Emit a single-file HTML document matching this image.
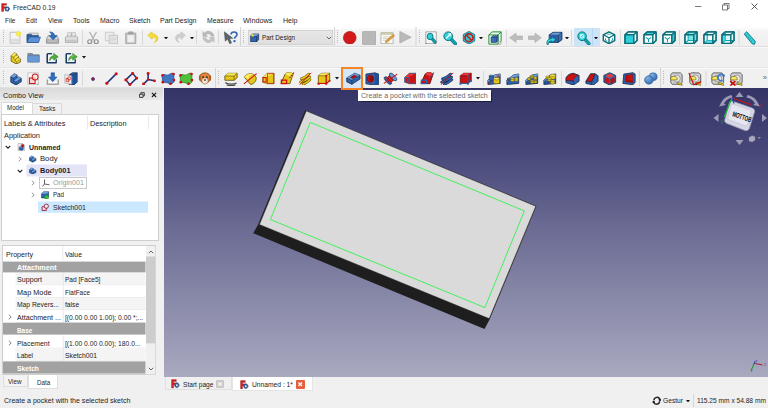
<!DOCTYPE html>
<html><head><meta charset="utf-8"><title>FreeCAD 0.19</title>
<style>
html,body{margin:0;padding:0;}
body{width:768px;height:408px;overflow:hidden;position:relative;background:#f0f0f0;font-family:"Liberation Sans",sans-serif;}
.b{position:absolute;display:block;box-sizing:border-box;}
.t{position:absolute;white-space:nowrap;transform-origin:0 50%;}
</style></head><body>
<div class="b" style="left:0px;top:0px;width:768.00px;height:27.00px;background:#fff;"></div>
<svg class="b" style="left:1px;top:2.5px" width="9" height="9.0" viewBox="0 0 16 16" preserveAspectRatio="none"><path d="M1 1h9v3H4.800v2.500H9v3H4.800V15H1z" fill="#d01f1f" stroke="#8a0e0e" stroke-width=".5"/><circle cx="11" cy="10.500" r="4" fill="#3465a4" stroke="#1b3a6b" stroke-width="1.600" stroke-dasharray="1.500 1.100"/><circle cx="11" cy="10.500" r="1.500" fill="#fff"/></svg>
<span class="t" style="left:13.00px;top:2.80px;font-size:7.6px;line-height:10px;color:#1c1c1c;transform:scaleX(0.8750);">FreeCAD 0.19</span>
<svg class="b" style="left:695px;top:6px" width="7" height="1"><rect x="0.00" y="0.20" width="6.30" height="0.70" fill="#444"/></svg>
<svg class="b" style="left:721px;top:2px" width="10" height="10" viewBox="0 0 10 10"><path d="M1.500 3h5v5h-5z" fill="none" stroke="#444" stroke-width=".700"/><path d="M3 3V1.500h5v5H6.500" fill="none" stroke="#444" stroke-width=".700"/></svg>
<svg class="b" style="left:750px;top:2px" width="10" height="10" viewBox="0 0 10 10"><path d="M1.500 1.500l6 6M7.500 1.500l-6 6" stroke="#333" stroke-width=".800"/></svg>
<span class="t" style="left:5.00px;top:15.90px;font-size:7.4px;line-height:10px;color:#1c1c1c;transform:scaleX(0.8806);">File</span>
<span class="t" style="left:26.00px;top:15.90px;font-size:7.4px;line-height:10px;color:#1c1c1c;transform:scaleX(0.8627);">Edit</span>
<span class="t" style="left:48.00px;top:15.90px;font-size:7.4px;line-height:10px;color:#1c1c1c;transform:scaleX(0.9116);">View</span>
<span class="t" style="left:73.00px;top:15.90px;font-size:7.4px;line-height:10px;color:#1c1c1c;transform:scaleX(0.9552);">Tools</span>
<span class="t" style="left:100.00px;top:15.90px;font-size:7.4px;line-height:10px;color:#1c1c1c;transform:scaleX(0.9485);">Macro</span>
<span class="t" style="left:129.00px;top:15.90px;font-size:7.4px;line-height:10px;color:#1c1c1c;transform:scaleX(0.9504);">Sketch</span>
<span class="t" style="left:160.00px;top:15.90px;font-size:7.4px;line-height:10px;color:#1c1c1c;transform:scaleX(0.9441);">Part Design</span>
<span class="t" style="left:207.00px;top:15.90px;font-size:7.4px;line-height:10px;color:#1c1c1c;transform:scaleX(0.9205);">Measure</span>
<span class="t" style="left:243.00px;top:15.90px;font-size:7.4px;line-height:10px;color:#1c1c1c;transform:scaleX(0.9827);">Windows</span>
<span class="t" style="left:283.00px;top:15.90px;font-size:7.4px;line-height:10px;color:#1c1c1c;transform:scaleX(0.9528);">Help</span>
<div class="b" style="left:0;top:27px;width:768px;height:19px;background:linear-gradient(#ffffff 0,#f3f3f3 22%,#efefef 100%)"></div>
<div class="b" style="left:0px;top:46px;width:768.00px;height:1.00px;background:#dedede;"></div>
<div class="b" style="left:0px;top:47px;width:768.00px;height:1.00px;background:#f8f8f8;"></div>
<div class="b" style="left:0px;top:48px;width:768.00px;height:19.00px;background:#f0f0f0;"></div>
<div class="b" style="left:0px;top:67px;width:768.00px;height:1.00px;background:#e8e8e8;"></div>
<div class="b" style="left:0px;top:68px;width:768.00px;height:1.00px;background:#f8f8f8;"></div>
<div class="b" style="left:0px;top:69px;width:768.00px;height:19.00px;background:#f0f0f0;"></div>
<div class="b" style="left:3px;top:30px;width:1px;height:14px;background:repeating-linear-gradient(#bdbdbd 0 1px,transparent 1px 2px)"></div>
<svg class="b" style="left:9px;top:30.5px" width="12" height="13.5" viewBox="0 0 16 16" preserveAspectRatio="none"><path d="M1.5 1.5h13v13h-13z" fill="#f4f4f4" stroke="#b5b5b5" stroke-width="1"/><path d="M2.5 9h11v4.5h-11z" fill="#dedede"/><circle cx="12.6" cy="3.4" r="3" fill="#f6f04a" stroke="#e6d936" stroke-width=".6"/></svg>
<svg class="b" style="left:26px;top:30.5px" width="15" height="13.5" viewBox="0 0 16 16" preserveAspectRatio="none"><path d="M3 2.5h10v9H3z" fill="#ececec" stroke="#9a9a9a" stroke-width=".8"/><path d="M1 4h5l1 1.2h6v8.3H1z" fill="#2f5f9e" stroke="#23487a" stroke-width=".8"/><path d="M3.4 7.2h12l-2 6.4H1.2z" fill="#5c93d6" stroke="#2d5a98" stroke-width=".8"/></svg>
<svg class="b" style="left:45px;top:30.5px" width="15" height="13.5" viewBox="0 0 16 16" preserveAspectRatio="none"><path d="M1.5 9.5l2-4h9l2 4v5h-13z" fill="#d9d9d9" stroke="#8a8a8a" stroke-width=".9"/><path d="M2.3 10.3h11.4v3.4H2.3z" fill="#bdbdbd" stroke="#8f8f8f" stroke-width=".6"/><path d="M5 1.2c3 0 5 1.2 5.2 4.3h2.6L8.6 10.4 4.6 5.5h2.5C7 3.6 6.3 2.2 5 1.200z" fill="#2e6fc0" stroke="#1d4f94" stroke-width=".7"/></svg>
<svg class="b" style="left:64px;top:30.5px" width="15" height="13.5" viewBox="0 0 16 16" preserveAspectRatio="none"><path d="M4 2h8v5H4z" fill="#f1f1f1" stroke="#b0b0b0" stroke-width=".8"/><path d="M1.5 7.5l1.5-1.5h10l1.500 1.500v6h-13z" fill="#dcdcdc" stroke="#a2a2a2" stroke-width=".9"/><path d="M2.500 10.500h11v2.200h-11z" fill="#c4c4c4"/><path d="M8 3v2.800M6.800 4.200L8 3l1.200 1.200" stroke="#aaa" stroke-width=".9" fill="none"/></svg>
<div class="b" style="left:82px;top:30px;width:1.00px;height:15.00px;background:#d8d8d8;"></div>
<svg class="b" style="left:86px;top:30.5px" width="14" height="13.5" viewBox="0 0 16 16" preserveAspectRatio="none"><path d="M4 1l5.500 10M12 1L6.500 11" stroke="#b4b4b4" stroke-width="1.500" fill="none"/><circle cx="4.300" cy="12.700" r="2.300" fill="none" stroke="#8f8f8f" stroke-width="1.400"/><circle cx="11.700" cy="12.700" r="2.300" fill="none" stroke="#8f8f8f" stroke-width="1.400"/></svg>
<svg class="b" style="left:104px;top:30.5px" width="15" height="13.5" viewBox="0 0 16 16" preserveAspectRatio="none"><path d="M1.500 1.500h9v10h-9z" fill="#ededed" stroke="#c4c4c4" stroke-width=".9"/><path d="M5.500 5h9v10h-9z" fill="#e4e4e4" stroke="#bdbdbd" stroke-width=".9"/><path d="M7 8h6M7 10h6M7 12h4" stroke="#d0d0d0" stroke-width=".8"/></svg>
<svg class="b" style="left:124px;top:30.5px" width="13.5" height="13.5" viewBox="0 0 16 16" preserveAspectRatio="none"><path d="M2 2.500h12v12.500H2z" fill="#bdbdbd" stroke="#9a9a9a" stroke-width=".9"/><path d="M3.800 4.500h8.400v9H3.800z" fill="#f0f0f0" stroke="#d0d0d0" stroke-width=".5"/><path d="M5.500 1h5v2.600h-5z" fill="#a9a9a9" stroke="#8f8f8f" stroke-width=".6"/></svg>
<div class="b" style="left:142px;top:30px;width:1.00px;height:15.00px;background:#d8d8d8;"></div>
<svg class="b" style="left:147px;top:31px" width="12.5" height="12" viewBox="0 0 16 16" preserveAspectRatio="none"><path d="M1 5.600L6.600 1v2.800c5 .2 7.600 3.200 7.200 6.600-.3 2.300-1.800 4-4.600 4.600 2-1.400 2.800-3 2.200-4.600-.6-1.500-2.300-2.200-4.800-2.200v3z" fill="#f5dc3a" stroke="#e0bf1c" stroke-width=".8"/></svg>
<svg class="b" style="left:163.5px;top:36.5px" width="4.0" height="2.5" viewBox="0 0 8 5" preserveAspectRatio="none"><path d="M0 0h8L4 5z" fill="#111"/></svg>
<svg class="b" style="left:173.5px;top:31px" width="12.0" height="12" viewBox="0 0 16 16" preserveAspectRatio="none"><path d="M15 5.600L9.400 1v2.800c-5 .2-7.600 3.200-7.200 6.600.3 2.300 1.800 4 4.600 4.600-2-1.400-2.800-3-2.200-4.600.6-1.500 2.300-2.200 4.800-2.200v3z" fill="#cfcfcf" stroke="#bdbdbd" stroke-width=".8"/></svg>
<svg class="b" style="left:190px;top:36.5px" width="4" height="2.5" viewBox="0 0 8 5" preserveAspectRatio="none"><path d="M0 0h8L4 5z" fill="#111"/></svg>
<div class="b" style="left:196px;top:30px;width:1.00px;height:14.00px;background:#d8d8d8;"></div>
<svg class="b" style="left:201.5px;top:30px" width="13.0" height="13.799999999999997" viewBox="0 0 16 16" preserveAspectRatio="none"><path d="M14.800 7.200A6.800 6.800 0 0 0 3 3.600L1 1.600v6h6L4.900 5.500a4 4 0 0 1 6.600 1.700z" fill="#b9b9b9" stroke="#a8a8a8" stroke-width=".4"/><path d="M1.200 8.800A6.800 6.800 0 0 0 13 12.400l2 2v-6H9l2.100 2.100a4 4 0 0 1-6.600-1.700z" fill="#c4c4c4" stroke="#a8a8a8" stroke-width=".4"/></svg>
<div class="b" style="left:218px;top:30px;width:1.00px;height:14.00px;background:#d8d8d8;"></div>
<svg class="b" style="left:223px;top:30.5px" width="14.5" height="13.5" viewBox="0 0 16 16" preserveAspectRatio="none"><path d="M1.500 1l1 11 2.600-2.400L7.400 15l2-.9-2.200-5.200 3.600-.3z" fill="#5d666c" stroke="#3e464b" stroke-width=".6"/><path d="M8.800 4.200c.2-2 1.500-3 3.300-3 2 0 3.300 1.200 3.300 2.900 0 2.600-2.700 2.500-2.700 5" fill="none" stroke="#2f66ad" stroke-width="1.700"/><circle cx="12.700" cy="12" r="1.300" fill="#2b63b0"/></svg>
<div class="b" style="left:240px;top:27px;width:1.00px;height:19.00px;background:#d4d4d4;"></div>
<div class="b" style="left:243px;top:30px;width:1px;height:14px;background:repeating-linear-gradient(#bdbdbd 0 1px,transparent 1px 2px)"></div>
<div class="b" style="left:247.500px;top:30px;width:85.500px;height:14.500px;background:linear-gradient(#e6e6e6,#dfdfdf);border:1px solid #d3d3d3;"></div>
<svg class="b" style="left:250px;top:32.5px" width="9.5" height="9.5" viewBox="0 0 16 16" preserveAspectRatio="none"><path d="M1 5L5 1.500h9.500V11L11 15H1z" fill="#2f63ad" stroke="#0f2748" stroke-width="1"/><path d="M1 5h10v10M11 5l3.500-3.500" fill="none" stroke="#0f2748" stroke-width=".8"/><path d="M5 1.500h9.500L11 5H1z" fill="#6fa0dc"/><circle cx="4.500" cy="4" r="2.300" fill="#f8ea5e" stroke="#5a4a00" stroke-width=".5"/></svg>
<span class="t" style="left:261.50px;top:32.80px;font-size:7.2px;line-height:10px;color:#1c1c1c;transform:scaleX(0.8773);">Part Design</span>
<svg class="b" style="left:325.500px;top:35.500px" width="6" height="4" viewBox="0 0 6 4"><path d="M.800 .800L3 3l2.200-2.200" fill="none" stroke="#444" stroke-width=".800"/></svg>
<div class="b" style="left:334px;top:27px;width:1.00px;height:19.00px;background:#d4d4d4;"></div>
<div class="b" style="left:337px;top:30px;width:1px;height:14px;background:repeating-linear-gradient(#bdbdbd 0 1px,transparent 1px 2px)"></div>
<svg class="b" style="left:343px;top:30.5px" width="13.5" height="13.5" viewBox="0 0 16 16" preserveAspectRatio="none"><circle cx="8" cy="8" r="7.500" fill="#d31a1a" stroke="#a80f0f" stroke-width=".8"/></svg>
<svg class="b" style="left:361.5px;top:30.5px" width="14.5" height="14.0" viewBox="0 0 16 16" preserveAspectRatio="none"><rect x=".5" y=".5" width="15" height="15" rx="1" fill="#b8b8b8" stroke="#a5a5a5" stroke-width=".8"/></svg>
<svg class="b" style="left:379.5px;top:30.5px" width="15.0" height="13.5" viewBox="0 0 16 16" preserveAspectRatio="none"><path d="M1 2h13v13H1z" fill="#fbfbf7" stroke="#a9a79a" stroke-width=".9"/><path d="M1 2h13v2.500H1z" fill="#cfc9a5"/><path d="M3 7h9M3 9h9M3 11h6" stroke="#bdbba8" stroke-width=".7"/><path d="M15.500 5.500L8 13l-2.300.8.700-2.300L14 4z" fill="#e9a23a" stroke="#a8641a" stroke-width=".6"/></svg>
<svg class="b" style="left:399px;top:31px" width="13" height="12.5" viewBox="0 0 16 16" preserveAspectRatio="none"><path d="M1 .5L15 8 1 15.500z" fill="#b9b9b9" stroke="#a3a3a3" stroke-width=".8"/></svg>
<svg class="b" style="left:415px;top:27px" width="2" height="19"><rect x="0.50" y="0.00" width="1.00" height="19.00" fill="#d4d4d4"/></svg>
<div class="b" style="left:419px;top:30px;width:1px;height:14px;background:repeating-linear-gradient(#bdbdbd 0 1px,transparent 1px 2px)"></div>
<svg class="b" style="left:425px;top:30.5px" width="12.5" height="13.5" viewBox="0 0 16 16" preserveAspectRatio="none"><path d="M1 1h13.500v14H1z" fill="#f6f6f6" stroke="#8e8e8e" stroke-width=".9"/><path d="M1 13.500l2 1.500H1z" fill="#666"/><path d="M8.78 8.78L12.8 13.2" stroke="#0b6f7a" stroke-width="3.8" stroke-linecap="round"/><path d="M8.78 8.78L12.8 13.2" stroke="#10a0ac" stroke-width="2.6" stroke-linecap="round"/><circle cx="6.5" cy="6.5" r="3.8" fill="#2fd0dc" stroke="#0b6f7a" stroke-width="1.100"/></svg>
<svg class="b" style="left:443px;top:30.5px" width="14" height="14.0" viewBox="0 0 16 16" preserveAspectRatio="none"><path d="M9.0 9.0L14 14.5" stroke="#0b6f7a" stroke-width="4.0" stroke-linecap="round"/><path d="M9.0 9.0L14 14.5" stroke="#10a0ac" stroke-width="2.8" stroke-linecap="round"/><circle cx="6" cy="6" r="5" fill="#2fd0dc" stroke="#0b6f7a" stroke-width="1.100"/><path d="M3.500 8.500l5-5" stroke="#e8ffff" stroke-width="1.600"/><path d="M6 3.200h2.800V6" fill="none" stroke="#e8ffff" stroke-width="1.200"/></svg>
<svg class="b" style="left:461.5px;top:30.5px" width="14.0" height="13.5" viewBox="0 0 16 16" preserveAspectRatio="none"><path d="M8 .5l6.500 3.700v7.600L8 15.500 1.500 11.800V4.200z" fill="#2fd0dc" stroke="#0b6f7a" stroke-width="1"/><circle cx="8" cy="8" r="4.600" fill="none" stroke="#c21b1b" stroke-width="1.900"/><path d="M4.800 4.800l6.400 6.400" stroke="#c21b1b" stroke-width="1.900"/></svg>
<svg class="b" style="left:479px;top:36.5px" width="4" height="2.5" viewBox="0 0 8 5" preserveAspectRatio="none"><path d="M0 0h8L4 5z" fill="#111"/></svg>
<svg class="b" style="left:488px;top:30.5px" width="14" height="14.0" viewBox="0 0 16 16" preserveAspectRatio="none"><path d="M1 4.500L4.500 1H15v10.500L11.500 15H1z" fill="#eef6ee" stroke="#1e8f2e" stroke-width="1.100"/><path d="M1 4.500h10.500V15M11.500 4.500L15 1" fill="none" stroke="#1e8f2e" stroke-width="1.100"/><path d="M3.500 7.500l2-2h6v5.500l-2 2h-6z" fill="#3b6fb5" stroke="#1a3a6a" stroke-width=".7"/><path d="M3.500 7.500h6v5.500M9.500 7.500l2-2" fill="none" stroke="#1a3a6a" stroke-width=".6"/><circle cx="13.500" cy="13.800" r="1.500" fill="#f4f4f4" stroke="#777" stroke-width=".6"/></svg>
<div class="b" style="left:506px;top:30px;width:1.00px;height:15.00px;background:#d8d8d8;"></div>
<svg class="b" style="left:509px;top:31.5px" width="14" height="11.5" viewBox="0 0 16 16" preserveAspectRatio="none"><path d="M.800 8L8 1.500v4h7.500v5H8v4z" fill="#bdbdbd" stroke="#a9a9a9" stroke-width=".7"/></svg>
<svg class="b" style="left:528px;top:31.5px" width="14" height="11.5" viewBox="0 0 16 16" preserveAspectRatio="none"><path d="M15.200 8L8 1.500v4H.500v5H8v4z" fill="#bdbdbd" stroke="#a9a9a9" stroke-width=".7"/></svg>
<svg class="b" style="left:546px;top:30.5px" width="17" height="14.0" viewBox="0 0 16 16" preserveAspectRatio="none"><path d="M3 4.500L6.500 1.500H15v8.500L11.500 13H3z" fill="#3d6fb3" stroke="#14305a" stroke-width=".9"/><path d="M3 4.500h8.500V13M11.500 4.500L15 1.500" fill="none" stroke="#14305a" stroke-width=".8"/><path d="M3.200 4.700h8.100V12.800H3.200z" fill="#2d5ea3"/><path d="M6.700 1.900h7.600L11.400 4.300H3.900z" fill="#6f9bd4"/><path d="M1 15.500c-.8-4 1-6.500 4.200-6.800V6.800L9.500 10l-4.300 3.200v-1.900c-1.800.2-3 1.500-3.100 4.200z" fill="#2fd0dc" stroke="#0b6f7a" stroke-width=".8"/></svg>
<svg class="b" style="left:564.5px;top:36.5px" width="4.0" height="2.5" viewBox="0 0 8 5" preserveAspectRatio="none"><path d="M0 0h8L4 5z" fill="#111"/></svg>
<div class="b" style="left:571px;top:30px;width:1.00px;height:15.00px;background:#d8d8d8;"></div>
<div class="b" style="left:574px;top:28px;width:26.00px;height:18.00px;background:#cce4f7;"></div>
<div class="b" style="left:592px;top:28px;width:1.00px;height:18.00px;background:#b8d6f0;"></div>
<svg class="b" style="left:577px;top:30.5px" width="13.5" height="14.0" viewBox="0 0 16 16" preserveAspectRatio="none"><path d="M9.0 9.0L14 14.5" stroke="#0b6f7a" stroke-width="4.0" stroke-linecap="round"/><path d="M9.0 9.0L14 14.5" stroke="#10a0ac" stroke-width="2.8" stroke-linecap="round"/><circle cx="6" cy="6" r="5" fill="#2fd0dc" stroke="#0b6f7a" stroke-width="1.100"/><circle cx="6" cy="6" r="2.200" fill="none" stroke="#e8ffff" stroke-width="1.100"/><path d="M4 4l4 4" stroke="#e8ffff" stroke-width="1"/></svg>
<svg class="b" style="left:594px;top:36.5px" width="4" height="2.5" viewBox="0 0 8 5" preserveAspectRatio="none"><path d="M0 0h8L4 5z" fill="#111"/></svg>
<svg class="b" style="left:602px;top:30.5px" width="14" height="13.5" viewBox="0 0 16 16" preserveAspectRatio="none"><path d="M8 1l6.500 3.500v7L8 15l-6.500-3.500v-7z" fill="#fff" stroke="#0b6f7a" stroke-width="1.700" stroke-linejoin="round"/><path d="M1.500 4.500L8 8l6.500-3.500M8 8v7" fill="none" stroke="#0b6f7a" stroke-width="1.500"/><path d="M4 8.500v2.500l2 1M12 8.500v2.500l-2 1M6 4.500l2-1 2 1" fill="none" stroke="#10a0ac" stroke-width="1"/></svg>
<div class="b" style="left:620px;top:30px;width:1.00px;height:15.00px;background:#d8d8d8;"></div>
<svg class="b" style="left:624px;top:30.5px" width="14" height="13.5" viewBox="0 0 16 16" preserveAspectRatio="none"><path d="M1.200 4.500L4.800 1.200h10v10l-3.600 3.600H1.200z" fill="#fff" stroke="#0b6f7a" stroke-width="1.700" stroke-linejoin="round"/><path d="M1.200 4.500h10v10.300H1.200z" fill="#2fd0dc"/><path d="M1.200 4.500L4.800 1.200h10l-3.600 3.300z" fill="#eafcfd"/><path d="M11.200 4.500l3.600-3.300v10l-3.600 3.600z" fill="#f4ffff"/><path d="M1.200 4.500L4.800 1.200h10v10l-3.600 3.600H1.200z" fill="none" stroke="#0b6f7a" stroke-width="1.700" stroke-linejoin="round"/><path d="M1.200 4.500h10v10.300M11.200 4.500l3.600-3.300" fill="none" stroke="#0b6f7a" stroke-width="1.700"/></svg>
<svg class="b" style="left:643px;top:30.5px" width="14" height="13.5" viewBox="0 0 16 16" preserveAspectRatio="none"><path d="M1.200 4.500L4.800 1.200h10v10l-3.600 3.600H1.200z" fill="#fff" stroke="#0b6f7a" stroke-width="1.700" stroke-linejoin="round"/><path d="M1.200 4.500h10v10.300H1.200z" fill="#fff"/><path d="M1.200 4.500L4.800 1.200h10l-3.600 3.300z" fill="#2fd0dc"/><path d="M11.200 4.500l3.600-3.300v10l-3.600 3.600z" fill="#f4ffff"/><path d="M3.300 7.500l3 2.500 3-2.500M6.300 10v3" stroke="#10a0ac" stroke-width="1.200" fill="none"/><path d="M1.200 4.500L4.800 1.200h10v10l-3.600 3.600H1.200z" fill="none" stroke="#0b6f7a" stroke-width="1.700" stroke-linejoin="round"/><path d="M1.200 4.500h10v10.300M11.200 4.500l3.600-3.300" fill="none" stroke="#0b6f7a" stroke-width="1.700"/></svg>
<svg class="b" style="left:662px;top:30.5px" width="14" height="13.5" viewBox="0 0 16 16" preserveAspectRatio="none"><path d="M1.200 4.500L4.800 1.200h10v10l-3.600 3.600H1.200z" fill="#fff" stroke="#0b6f7a" stroke-width="1.700" stroke-linejoin="round"/><path d="M1.200 4.500h10v10.300H1.200z" fill="#fff"/><path d="M1.200 4.500L4.800 1.200h10l-3.600 3.300z" fill="#eafcfd"/><path d="M11.200 4.500l3.600-3.300v10l-3.600 3.600z" fill="#2fd0dc"/><path d="M3.300 7.500l3 2.500 3-2.500M6.300 10v3" stroke="#10a0ac" stroke-width="1.200" fill="none"/><path d="M1.200 4.500L4.800 1.200h10v10l-3.600 3.600H1.200z" fill="none" stroke="#0b6f7a" stroke-width="1.700" stroke-linejoin="round"/><path d="M1.200 4.500h10v10.300M11.200 4.500l3.600-3.300" fill="none" stroke="#0b6f7a" stroke-width="1.700"/></svg>
<div class="b" style="left:679px;top:30px;width:1.00px;height:15.00px;background:#d8d8d8;"></div>
<svg class="b" style="left:684px;top:30.5px" width="14" height="13.5" viewBox="0 0 16 16" preserveAspectRatio="none"><path d="M1.200 4.500L4.800 1.200h10v10l-3.600 3.600H1.200z" fill="#fff" stroke="#0b6f7a" stroke-width="1.700" stroke-linejoin="round"/><path d="M1.200 4.500h10v10.300H1.200z" fill="#e2fafb"/><path d="M1.200 4.500L4.800 1.200h10l-3.600 3.300z" fill="#eafcfd"/><path d="M11.200 4.500l3.600-3.300v10l-3.600 3.600z" fill="#bff0f4"/><path d="M4.800 1.200v10h10M4.800 11.200l-3.600 3.600" fill="none" stroke="#10a0ac" stroke-width="1.300"/><path d="M5 1h10v10H5z" fill="#2fd0dc" opacity=".55"/><path d="M1.200 4.500L4.800 1.200h10v10l-3.600 3.600H1.200z" fill="none" stroke="#0b6f7a" stroke-width="1.700" stroke-linejoin="round"/><path d="M1.200 4.500h10v10.300M11.200 4.500l3.600-3.300" fill="none" stroke="#0b6f7a" stroke-width="1.700"/></svg>
<svg class="b" style="left:703px;top:30.5px" width="14" height="13.5" viewBox="0 0 16 16" preserveAspectRatio="none"><path d="M1.200 4.500L4.800 1.200h10v10l-3.600 3.600H1.200z" fill="#fff" stroke="#0b6f7a" stroke-width="1.700" stroke-linejoin="round"/><path d="M1.200 4.500h10v10.300H1.200z" fill="#f4ffff"/><path d="M1.200 4.500L4.800 1.200h10l-3.600 3.300z" fill="#eafcfd"/><path d="M11.200 4.500l3.600-3.300v10l-3.600 3.600z" fill="#e2fafb"/><path d="M4.800 1.200v10h10M4.800 11.200l-3.600 3.600" fill="none" stroke="#10a0ac" stroke-width="1.300"/><path d="M1 15l4-4h10l-4 4z" fill="#2fd0dc" opacity=".7"/><path d="M1.200 4.500L4.800 1.200h10v10l-3.600 3.600H1.200z" fill="none" stroke="#0b6f7a" stroke-width="1.700" stroke-linejoin="round"/><path d="M1.200 4.500h10v10.300M11.200 4.500l3.600-3.300" fill="none" stroke="#0b6f7a" stroke-width="1.700"/></svg>
<svg class="b" style="left:721px;top:30.5px" width="14" height="13.5" viewBox="0 0 16 16" preserveAspectRatio="none"><path d="M1.200 4.500L4.800 1.200h10v10l-3.600 3.600H1.200z" fill="#fff" stroke="#0b6f7a" stroke-width="1.700" stroke-linejoin="round"/><path d="M1.200 4.500h10v10.300H1.200z" fill="#d8f7f9"/><path d="M1.200 4.500L4.800 1.200h10l-3.600 3.300z" fill="#eafcfd"/><path d="M11.200 4.500l3.600-3.300v10l-3.600 3.600z" fill="#e2fafb"/><path d="M4.800 1.200v10h10M4.800 11.200l-3.600 3.600" fill="none" stroke="#10a0ac" stroke-width="1.300"/><path d="M1 5l4-4v10l-4 4z" fill="#2fd0dc" opacity=".8"/><path d="M1.200 4.500L4.800 1.200h10v10l-3.600 3.600H1.200z" fill="none" stroke="#0b6f7a" stroke-width="1.700" stroke-linejoin="round"/><path d="M1.200 4.500h10v10.300M11.200 4.500l3.600-3.300" fill="none" stroke="#0b6f7a" stroke-width="1.700"/></svg>
<svg class="b" style="left:738px;top:30px" width="2" height="15"><rect x="0.50" y="0.00" width="1.00" height="15.00" fill="#d8d8d8"/></svg>
<svg class="b" style="left:743px;top:30.5px" width="13" height="14.0" viewBox="0 0 16 16" preserveAspectRatio="none"><path d="M1.500 3.500L4.500 .800 15.200 12l-1 3.200-2.800-.4z" fill="#2fd0dc" stroke="#0b6f7a" stroke-width="1"/><path d="M4 5.500l1.500-1.300M6 7.500l1.500-1.300M8 9.600l1.500-1.300M10 11.700l1.500-1.300" stroke="#0b6f7a" stroke-width=".7"/></svg>
<div class="b" style="left:3px;top:50px;width:1px;height:14px;background:repeating-linear-gradient(#bdbdbd 0 1px,transparent 1px 2px)"></div>
<svg class="b" style="left:9.5px;top:50.5px" width="11.5" height="13.5" viewBox="0 0 16 16" preserveAspectRatio="none"><path d="M1.500 5.500L6 2l3.500 1.500v2l2.500 1v2l3 1.200v3L9 15.500 1.500 12z" fill="#e6c619" stroke="#5a4a00" stroke-width=".9" stroke-linejoin="round"/><path d="M1.500 5.500L6 2l3.500 1.500L5 7z" fill="#f8ea5e"/><path d="M5 9l4.500-3.500 2.500 1L7.500 10z" fill="#f8ea5e"/><path d="M7.500 12l4.500-3.500 3 1.200-6 3.800z" fill="#f8ea5e"/><path d="M1.500 5.500L5 7v2l2.500 1v2L9 12.600v2.900M5 7l4.500-3.500M7.500 10L12 6.500M9 12.600l6-2.900" fill="none" stroke="#5a4a00" stroke-width=".6"/></svg>
<svg class="b" style="left:27px;top:51.5px" width="13" height="11.5" viewBox="0 0 16 16" preserveAspectRatio="none"><path d="M1 2h5.500l1.200 1.800H15V14H1z" fill="#7b8797" stroke="#66717f" stroke-width=".8"/><path d="M1 5.200h14v8.800H1z" fill="#6a9ad6" stroke="#4a78b4" stroke-width=".6"/></svg>
<svg class="b" style="left:46px;top:50.5px" width="13" height="13.0" viewBox="0 0 16 16" preserveAspectRatio="none"><path d="M1.500 3.500h6M1.500 3.500v11h11V10" fill="none" stroke="#173a63" stroke-width="1.900" stroke-linejoin="round"/><path d="M2.600 4.600h8.800v8.800H2.600z" fill="#f2f5f8"/><path d="M4.500 12c0-4 1.700-6 5-6.300V3L15 7.200 9.500 11.300V8.700c-2.400.1-4 1.100-5 3.300z" fill="#4fae3a" stroke="#2a7a1c" stroke-width=".7"/></svg>
<svg class="b" style="left:64.5px;top:50.5px" width="13.0" height="13.0" viewBox="0 0 16 16" preserveAspectRatio="none"><path d="M1.500 3.500h6M1.500 3.500v11h11V10" fill="none" stroke="#173a63" stroke-width="1.900" stroke-linejoin="round"/><path d="M2.600 4.600h8.800v8.800H2.600z" fill="#f2f5f8"/><path d="M4.500 12c0-4 1.700-6 5-6.300V3L15 7.200 9.500 11.300V8.700c-2.400.1-4 1.100-5 3.300z" fill="#4fae3a" stroke="#2a7a1c" stroke-width=".7"/><path d="M8 9c.5-2.500 2-3.500 4-3.700" fill="none" stroke="#8fd67c" stroke-width=".8"/></svg>
<svg class="b" style="left:82px;top:56px" width="4" height="2.5" viewBox="0 0 8 5" preserveAspectRatio="none"><path d="M0 0h8L4 5z" fill="#111"/></svg>
<div class="b" style="left:3px;top:71px;width:1px;height:14px;background:repeating-linear-gradient(#bdbdbd 0 1px,transparent 1px 2px)"></div>
<svg class="b" style="left:9.5px;top:71.5px" width="12.0" height="13.5" viewBox="0 0 16 16" preserveAspectRatio="none"><path d="M1 5.500L5.500 2 9.500 3.800v3.400l2-1.400 3.500 1.700v4L8 15.500 1 12z" fill="#2f63ad" stroke="#0f2748" stroke-width=".9" stroke-linejoin="round"/><path d="M1 5.500L5.500 2 9.500 3.800 5 7.300z" fill="#6fa0dc"/><path d="M5 10.800l6.500-5 3.500 1.700L8 12.200z" fill="#6fa0dc"/><path d="M1 5.500l4 1.800v3.500l3 1.400v3.300M5 7.300l4.500-3.500M8 12.200l7-4.700" fill="none" stroke="#0f2748" stroke-width=".6"/></svg>
<svg class="b" style="left:27px;top:71.5px" width="13" height="13.5" viewBox="0 0 16 16" preserveAspectRatio="none"><path d="M1 1h13v14H1z" fill="#f7f7f7" stroke="#b0b0b0" stroke-width=".8"/><path d="M12 15l2-2v2z" fill="#999"/><path d="M3 7h7v6.500H3z" fill="#f9d5d5" stroke="#cc1111" stroke-width="1.200"/><circle cx="10" cy="6" r="3.600" fill="#fbe3e3" fill-opacity=".7" stroke="#cc1111" stroke-width="1.200"/></svg>
<svg class="b" style="left:45.5px;top:71.5px" width="13.5" height="13.5" viewBox="0 0 16 16" preserveAspectRatio="none"><path d="M1.500 9v5.500h13V9" fill="#e9e9e9" stroke="#8d8d8d" stroke-width="1.300"/><path d="M3 10.500h10v2.500H3z" fill="#fafafa"/><path d="M6 1h4v5h3l-5 5.500L3 6h3z" fill="#2e6fc0" stroke="#1d4f94" stroke-width=".7"/></svg>
<svg class="b" style="left:64px;top:71.5px" width="14" height="13.5" viewBox="0 0 16 16" preserveAspectRatio="none"><path d="M6 3.500L9.500 1H15v11l-3.500 3H6z" fill="#2f63ad" stroke="#0f2748" stroke-width=".9"/><path d="M6 3.500h5.500V15M11.500 3.500L15 1" fill="none" stroke="#0f2748" stroke-width=".7"/><path d="M11.500 3.500L15 1v11l-3.500 3z" fill="#244f90"/><path d="M1 3l7.500 1.500v10L1 13z" fill="#f4f4f4" stroke="#999" stroke-width=".7"/><path d="M2.500 7.500l3 .6v3.600l-3-.6z" fill="#f9d5d5" stroke="#cc1111" stroke-width=".8"/><circle cx="5.800" cy="7.600" r="1.900" fill="none" stroke="#cc1111" stroke-width=".8"/></svg>
<div class="b" style="left:82px;top:71px;width:1.00px;height:15.00px;background:#d8d8d8;"></div>
<svg class="b" style="left:91px;top:76.5px" width="4" height="4.0" viewBox="0 0 16 16" preserveAspectRatio="none"><circle cx="8" cy="8" r="6" fill="#cc1111" stroke="#233a8a" stroke-width="3"/></svg>
<svg class="b" style="left:105px;top:72px" width="13" height="13" viewBox="0 0 16 16" preserveAspectRatio="none"><path d="M2 14L14 2" stroke="#1c2f7a" stroke-width="1.800"/><circle cx="2.200" cy="13.800" r="1.900" fill="#cc1111"/><circle cx="13.800" cy="2.200" r="1.900" fill="#cc1111"/></svg>
<svg class="b" style="left:123.5px;top:71.5px" width="14.5" height="14.0" viewBox="0 0 16 16" preserveAspectRatio="none"><path d="M2 9L9.500 1.500 14 7 6.500 14.500z" fill="none" stroke="#1c2f7a" stroke-width="1.700"/><circle cx="2" cy="9" r="1.700" fill="#cc1111"/><circle cx="9.500" cy="1.700" r="1.700" fill="#cc1111"/><circle cx="14" cy="7" r="1.700" fill="#cc1111"/><circle cx="6.500" cy="14.300" r="1.700" fill="#cc1111"/></svg>
<svg class="b" style="left:142px;top:71.5px" width="14" height="13.5" viewBox="0 0 16 16" preserveAspectRatio="none"><path d="M7 1.500V9L1.500 14.500M7 9l7.500 1.500" fill="none" stroke="#1c2f7a" stroke-width="1.800"/><circle cx="7" cy="1.800" r="1.700" fill="#cc1111"/><circle cx="1.800" cy="14.200" r="1.700" fill="#cc1111"/><circle cx="14.200" cy="10.500" r="1.700" fill="#cc1111"/><circle cx="7" cy="9" r="1.400" fill="#cc1111"/></svg>
<svg class="b" style="left:161px;top:71.5px" width="14.5" height="13.5" viewBox="0 0 16 16" preserveAspectRatio="none"><path d="M1.500 3.500C4 2 6 4.500 8 3.500s3.500-3 6-1.500c1 2-.5 4 .5 6.500s-1 5-3.500 5.500-3.500-2-6-1.500S1 11 1.500 8.500 0 5.500 1.500 3.500z" fill="#3f76c2" stroke="#1d4584" stroke-width=".8"/><circle cx="1.800" cy="3.800" r="1.500" fill="#cc1111"/><circle cx="13.800" cy="2.400" r="1.500" fill="#cc1111"/><circle cx="14.200" cy="9.500" r="1.500" fill="#cc1111"/><circle cx="10.500" cy="14" r="1.500" fill="#cc1111"/><circle cx="2" cy="12" r="1.500" fill="#cc1111"/></svg>
<svg class="b" style="left:179px;top:71.5px" width="14.5" height="13.5" viewBox="0 0 16 16" preserveAspectRatio="none"><path d="M1.500 3.500C4 2 6 4.500 8 3.500s3.500-3 6-1.500c1 2-.5 4 .5 6.500s-1 5-3.500 5.500-3.500-2-6-1.500S1 11 1.500 8.500 0 5.500 1.500 3.500z" fill="#4fc23a" stroke="#22761a" stroke-width=".8"/><circle cx="1.800" cy="3.800" r="1.500" fill="#cc1111"/><circle cx="13.800" cy="2.400" r="1.500" fill="#cc1111"/><circle cx="14.200" cy="9.500" r="1.500" fill="#cc1111"/><circle cx="10.500" cy="14" r="1.500" fill="#cc1111"/><circle cx="2" cy="12" r="1.500" fill="#cc1111"/></svg>
<svg class="b" style="left:198px;top:71.5px" width="14" height="13.5" viewBox="0 0 16 16" preserveAspectRatio="none"><ellipse cx="8" cy="7" rx="6.500" ry="6" fill="#e2853a" stroke="#7a3f12" stroke-width=".8"/><path d="M2.500 3c-2 2-2 6 0 8 1-2.500 1-5.500 0-8zM13.500 3c2 2 2 6 0 8-1-2.500-1-5.500 0-8z" fill="#a85a22"/><ellipse cx="8" cy="10.500" rx="3.600" ry="3.800" fill="#fbe8d4" stroke="#7a3f12" stroke-width=".5"/><circle cx="5.800" cy="6" r="1" fill="#222"/><circle cx="10.200" cy="6" r="1" fill="#222"/><ellipse cx="8" cy="9.500" rx="1.200" ry=".9" fill="#222"/></svg>
<div class="b" style="left:215px;top:68px;width:1.00px;height:20.00px;background:#d4d4d4;"></div>
<div class="b" style="left:218px;top:71px;width:1px;height:14px;background:repeating-linear-gradient(#bdbdbd 0 1px,transparent 1px 2px)"></div>
<svg class="b" style="left:224px;top:71.5px" width="14" height="14.0" viewBox="0 0 16 16" preserveAspectRatio="none"><path d="M1 4.5l3.5 -3h10.5v5l-3.5 3h-10.5z" fill="#e6c619" stroke="#5a4a00" stroke-width=".9" stroke-linejoin="round"/><path d="M1 4.5l3.5 -3h10.5l-3.5 3z" fill="#f8ea5e"/><path d="M1 4.5h10.5v5M11.5 4.5l3.5 -3" fill="none" stroke="#5a4a00" stroke-width=".7"/><path d="M1.500 12c2 2 9 2.800 13 .5M3 14.800c3 1 7 1 10 0" fill="none" stroke="#4a4a4a" stroke-width="1.300"/></svg>
<svg class="b" style="left:243px;top:71.5px" width="14.5" height="13.5" viewBox="0 0 16 16" preserveAspectRatio="none"><path d="M1.500 6C3 2.500 8 1 12 3l2.500 3.500c.5 4-2 7-6 8.500z" fill="#e6c619" stroke="#5a4a00" stroke-width=".9"/><path d="M1.500 6C3 2.500 8 1 12 3c-3.500.5-6 3-6 6z" fill="#f8ea5e"/><path d="M1 14L15 2" stroke="#cc1111" stroke-width="1.200"/></svg>
<svg class="b" style="left:262px;top:71.5px" width="12.5" height="13.0" viewBox="0 0 16 16" preserveAspectRatio="none"><path d="M1 6.500L7 1.500h8.500V14.500H7L1 12.500z" fill="#e6c619" stroke="#5a4a00" stroke-width=".7" stroke-linejoin="round"/><path d="M1 6.500L7 1.500h8.500L5.500 6.500z" fill="#f8ea5e"/><path d="M7 2h8v12H7z" fill="none" stroke="#cc1111" stroke-width=".900"/><path d="M1.300 6.800h4v5.400h-4z" fill="#e6c619" stroke="#cc1111" stroke-width="1.300"/></svg>
<svg class="b" style="left:279.5px;top:71.0px" width="15.0" height="14.0" viewBox="0 0 16 16" preserveAspectRatio="none"><path d="M1 14L5.500 3.500C7 1.500 11 1 14 3.500l-3.500 11z" fill="#e6c619" stroke="#5a4a00" stroke-width=".9"/><path d="M5.500 3.500C7 1.500 11 1 14 3.500L10 6z" fill="#f8ea5e"/><path d="M1.500 10.500h5.500v4H1.500z" fill="none" stroke="#cc1111" stroke-width="1.400"/><path d="M10 8L15.500 1" stroke="#cc1111" stroke-width="1.100" stroke-dasharray="2 1"/></svg>
<svg class="b" style="left:299px;top:71.5px" width="13" height="13.5" viewBox="0 0 16 16" preserveAspectRatio="none"><path d="M2 12c3-1 8-3 11-6M3 8c3-1 6-2.500 9-5.500M5 14.500c3-1 6-3 8.500-5.500" fill="none" stroke="#5a4a00" stroke-width="3.200" stroke-linecap="round"/><path d="M2 12c3-1 8-3 11-6M3 8c3-1 6-2.500 9-5.500M5 14.500c3-1 6-3 8.500-5.500" fill="none" stroke="#e6c619" stroke-width="2" stroke-linecap="round"/><path d="M1 15L15 1" stroke="#cc1111" stroke-width="1.100"/></svg>
<svg class="b" style="left:317px;top:71.5px" width="14" height="13.5" viewBox="0 0 16 16" preserveAspectRatio="none"><path d="M1.5 4.5l4 -3h9v9l-4 3h-9z" fill="#e6c619" stroke="#5a4a00" stroke-width=".9" stroke-linejoin="round"/><path d="M1.5 4.5l4 -3h9l-4 3z" fill="#f8ea5e"/><path d="M1.5 4.5h9v9M10.5 4.5l4 -3" fill="none" stroke="#5a4a00" stroke-width=".7"/><path d="M1.500 13.500h9l4-3M10.500 13.500v-9" fill="none" stroke="#cc1111" stroke-width="1.200"/><circle cx="1.800" cy="13.800" r="1.400" fill="#cc1111"/><circle cx="10.500" cy="13.800" r="1.400" fill="#cc1111"/><circle cx="14.400" cy="10.500" r="1.200" fill="#cc1111"/><circle cx="10.500" cy="4.500" r="1.100" fill="#cc1111"/></svg>
<svg class="b" style="left:335px;top:77px" width="4" height="2.5" viewBox="0 0 8 5" preserveAspectRatio="none"><path d="M0 0h8L4 5z" fill="#111"/></svg>
<svg class="b" style="left:364.5px;top:71.5px" width="14.5" height="13.5" viewBox="0 0 16 16" preserveAspectRatio="none"><path d="M1 2.500L11 1l4 1.500V15l-4 .5L1 14z" fill="#2f63ad" stroke="#0f2748" stroke-width=".9" stroke-linejoin="round"/><path d="M11 1l4 1.500V15l-4 .5z" fill="#244f90"/><ellipse cx="6" cy="8" rx="3.600" ry="4.200" fill="#cc1111" stroke="#5a0808" stroke-width=".7"/><ellipse cx="6.800" cy="8" rx="2.200" ry="3" fill="#8a0c0c"/></svg>
<svg class="b" style="left:383px;top:71.5px" width="15" height="13.5" viewBox="0 0 16 16" preserveAspectRatio="none"><g transform="rotate(-38 8 8)"><ellipse cx="4.500" cy="8" rx="2.200" ry="5.500" fill="#2f63ad" stroke="#0f2748" stroke-width=".7"/><path d="M4.500 4.500h7v7h-7z" fill="#cc1111"/><ellipse cx="8" cy="8" rx="1.600" ry="3.600" fill="#ee3a3a" stroke="#5a0808" stroke-width=".5"/><path d="M8 4.400h3.500v7.200H8z" fill="#cc1111"/><ellipse cx="11.500" cy="8" rx="2.200" ry="5.500" fill="#6fa0dc" stroke="#0f2748" stroke-width=".7"/><path d="M-1 8h18" stroke="#cc1111" stroke-width="1.100"/></g></svg>
<svg class="b" style="left:403.5px;top:71.5px" width="12.5" height="13.0" viewBox="0 0 16 16" preserveAspectRatio="none"><path d="M1 6.500L7 1.500h8.500V14.500H7L1 12.500z" fill="#cc1111" stroke="#5a0808" stroke-width=".7" stroke-linejoin="round"/><path d="M1 6.500L7 1.500h8.500L5.500 6.500z" fill="#ee3a3a"/><path d="M7 2h8v12H7z" fill="none" stroke="#2f63ad" stroke-width=".900"/><path d="M1.300 6.800h4v5.400h-4z" fill="#cc1111" stroke="#2f63ad" stroke-width="1.300"/></svg>
<svg class="b" style="left:420px;top:71.0px" width="15" height="14.0" viewBox="0 0 16 16" preserveAspectRatio="none"><path d="M1 14L5.500 3.500C7 1.500 11 1 14 3.500l-3.500 11z" fill="#cc1111" stroke="#5a0808" stroke-width=".9"/><path d="M5.500 3.500C7 1.500 11 1 14 3.500L10 6z" fill="#ee3a3a"/><path d="M1.500 10.500h5.500v4H1.500z" fill="none" stroke="#2f63ad" stroke-width="1.400"/><path d="M10 8L15.500 1" stroke="#2f63ad" stroke-width="1.100" stroke-dasharray="2 1"/></svg>
<svg class="b" style="left:440px;top:71.5px" width="14" height="13.5" viewBox="0 0 16 16" preserveAspectRatio="none"><path d="M2 12c3-1 8-3 11-6M3 8c3-1 6-2.500 9-5.500M5 14.500c3-1 6-3 8.500-5.500" fill="none" stroke="#0f2748" stroke-width="3.200" stroke-linecap="round"/><path d="M2 12c3-1 8-3 11-6M3 8c3-1 6-2.500 9-5.500M5 14.500c3-1 6-3 8.500-5.500" fill="none" stroke="#2f63ad" stroke-width="2" stroke-linecap="round"/><path d="M1 15L15 1" stroke="#cc1111" stroke-width="1.100"/></svg>
<svg class="b" style="left:458.5px;top:71.5px" width="13.5" height="13.5" viewBox="0 0 16 16" preserveAspectRatio="none"><path d="M1.5 4.5l4 -3h9v9l-4 3h-9z" fill="#cc1111" stroke="#5a0808" stroke-width=".9" stroke-linejoin="round"/><path d="M1.5 4.5l4 -3h9l-4 3z" fill="#ee3a3a"/><path d="M1.5 4.5h9v9M10.5 4.5l4 -3" fill="none" stroke="#5a0808" stroke-width=".7"/><path d="M1.500 13.500h9l4-3M10.500 13.500v-9" fill="none" stroke="#2f63ad" stroke-width="1.200"/><circle cx="1.800" cy="13.800" r="1.400" fill="#2f63ad"/><circle cx="10.500" cy="13.800" r="1.400" fill="#2f63ad"/><circle cx="14.400" cy="10.500" r="1.200" fill="#2f63ad"/><circle cx="10.500" cy="4.500" r="1.100" fill="#2f63ad"/></svg>
<svg class="b" style="left:476px;top:77px" width="4" height="2.5" viewBox="0 0 8 5" preserveAspectRatio="none"><path d="M0 0h8L4 5z" fill="#111"/></svg>
<div class="b" style="left:483px;top:71px;width:1.00px;height:15.00px;background:#d8d8d8;"></div>
<svg class="b" style="left:487px;top:71.5px" width="14.5" height="13.5" viewBox="0 0 16 16" preserveAspectRatio="none"><path d="M1 9.500L8.500 3.500l6-1.200V13.500L1 14.800z" fill="#2f63ad" stroke="#0f2748" stroke-width=".9" stroke-linejoin="round"/><path d="M1 9.500L8.500 3.500l6-1.200v3L8 7 1 12z" fill="#6fa0dc"/><path d="M1 12L8 7l6.500-1.700" fill="none" stroke="#0f2748" stroke-width=".5"/><path d="M2.50 4.50v4.50a2.30 0.97 0 0 0 4.60 0v-4.50z" fill="#2f63ad" stroke="#0f2748" stroke-width=".5"/><ellipse cx="4.80" cy="4.50" rx="2.30" ry="0.97" fill="#6fa0dc" stroke="#0f2748" stroke-width=".5"/><path d="M1.500 14L13 4" stroke="#cc1111" stroke-width="1.200" stroke-dasharray="2.200 1.200"/><path d="M7.20 8.00v4.50a3.30 1.39 0 0 0 6.60 0v-4.50z" fill="#e6c619" stroke="#5a4a00" stroke-width=".5"/><ellipse cx="10.50" cy="8.00" rx="3.30" ry="1.39" fill="#f8ea5e" stroke="#5a4a00" stroke-width=".5"/></svg>
<svg class="b" style="left:506px;top:71.5px" width="14" height="13.5" viewBox="0 0 16 16" preserveAspectRatio="none"><path d="M1 9.500L8.500 3.500l6-1.200V13.500L1 14.800z" fill="#2f63ad" stroke="#0f2748" stroke-width=".9" stroke-linejoin="round"/><path d="M1 9.500L8.500 3.500l6-1.200v3L8 7 1 12z" fill="#6fa0dc"/><path d="M1 12L8 7l6.500-1.700" fill="none" stroke="#0f2748" stroke-width=".5"/><path d="M1.60 7.80v2.00a1.70 0.71 0 0 0 3.40 0v-2.00z" fill="#2f63ad" stroke="#0f2748" stroke-width=".5"/><ellipse cx="3.30" cy="7.80" rx="1.70" ry="0.71" fill="#6fa0dc" stroke="#0f2748" stroke-width=".5"/><path d="M5.30 8.00v2.50a2.00 0.84 0 0 0 4.00 0v-2.50z" fill="#e6c619" stroke="#5a4a00" stroke-width=".5"/><ellipse cx="7.30" cy="8.00" rx="2.00" ry="0.84" fill="#f8ea5e" stroke="#5a4a00" stroke-width=".5"/><path d="M9.80 7.50v2.50a2.00 0.84 0 0 0 4.00 0v-2.50z" fill="#e6c619" stroke="#5a4a00" stroke-width=".5"/><ellipse cx="11.80" cy="7.50" rx="2.00" ry="0.84" fill="#f8ea5e" stroke="#5a4a00" stroke-width=".5"/></svg>
<svg class="b" style="left:525px;top:71.5px" width="14" height="13.5" viewBox="0 0 16 16" preserveAspectRatio="none"><path d="M1 9.500L8.500 3.500l6-1.200V13.500L1 14.800z" fill="#2f63ad" stroke="#0f2748" stroke-width=".9" stroke-linejoin="round"/><path d="M1 9.500L8.500 3.500l6-1.200v3L8 7 1 12z" fill="#6fa0dc"/><path d="M1 12L8 7l6.500-1.700" fill="none" stroke="#0f2748" stroke-width=".5"/><path d="M6.20 4.50v1.80a1.80 0.76 0 0 0 3.60 0v-1.80z" fill="#e6c619" stroke="#5a4a00" stroke-width=".5"/><ellipse cx="8.00" cy="4.50" rx="1.80" ry="0.76" fill="#f8ea5e" stroke="#5a4a00" stroke-width=".5"/><path d="M10.00 6.50v1.80a1.80 0.76 0 0 0 3.60 0v-1.80z" fill="#e6c619" stroke="#5a4a00" stroke-width=".5"/><ellipse cx="11.80" cy="6.50" rx="1.80" ry="0.76" fill="#f8ea5e" stroke="#5a4a00" stroke-width=".5"/><path d="M2.70 7.50v1.80a1.80 0.76 0 0 0 3.60 0v-1.80z" fill="#e6c619" stroke="#5a4a00" stroke-width=".5"/><ellipse cx="4.50" cy="7.50" rx="1.80" ry="0.76" fill="#f8ea5e" stroke="#5a4a00" stroke-width=".5"/><path d="M2.90 11.00v1.50a1.60 0.67 0 0 0 3.20 0v-1.50z" fill="#2f63ad" stroke="#0f2748" stroke-width=".5"/><ellipse cx="4.50" cy="11.00" rx="1.60" ry="0.67" fill="#6fa0dc" stroke="#0f2748" stroke-width=".5"/><path d="M6.30 10.50v2.00a2.00 0.84 0 0 0 4.00 0v-2.00z" fill="#e6c619" stroke="#5a4a00" stroke-width=".5"/><ellipse cx="8.30" cy="10.50" rx="2.00" ry="0.84" fill="#f8ea5e" stroke="#5a4a00" stroke-width=".5"/><path d="M10.30 10.80v1.60a1.70 0.71 0 0 0 3.40 0v-1.60z" fill="#e6c619" stroke="#5a4a00" stroke-width=".5"/><ellipse cx="12.00" cy="10.80" rx="1.70" ry="0.71" fill="#f8ea5e" stroke="#5a4a00" stroke-width=".5"/></svg>
<svg class="b" style="left:543px;top:71.5px" width="14" height="13.5" viewBox="0 0 16 16" preserveAspectRatio="none"><path d="M1 9.500L8.500 3.500l6-1.200V13.500L1 14.800z" fill="#2f63ad" stroke="#0f2748" stroke-width=".9" stroke-linejoin="round"/><path d="M1 9.500L8.500 3.500l6-1.200v3L8 7 1 12z" fill="#6fa0dc"/><path d="M1 12L8 7l6.500-1.700" fill="none" stroke="#0f2748" stroke-width=".5"/><path d="M3.50 5.50v2.00a2.00 0.84 0 0 0 4.00 0v-2.00z" fill="#e6c619" stroke="#5a4a00" stroke-width=".5"/><ellipse cx="5.50" cy="5.50" rx="2.00" ry="0.84" fill="#f8ea5e" stroke="#5a4a00" stroke-width=".5"/><path d="M2.40 10.00v2.50a1.90 0.80 0 0 0 3.80 0v-2.50z" fill="#2f63ad" stroke="#0f2748" stroke-width=".5"/><ellipse cx="4.30" cy="10.00" rx="1.90" ry="0.80" fill="#6fa0dc" stroke="#0f2748" stroke-width=".5"/><path d="M7.70 4.00v3.20a3.30 1.39 0 0 0 6.60 0v-3.20z" fill="#e6c619" stroke="#5a4a00" stroke-width=".5"/><ellipse cx="11.00" cy="4.00" rx="3.30" ry="1.39" fill="#f8ea5e" stroke="#5a4a00" stroke-width=".5"/><path d="M5.30 8.00v2.00a2.20 0.92 0 0 0 4.40 0v-2.00z" fill="#e6c619" stroke="#5a4a00" stroke-width=".5"/><ellipse cx="7.50" cy="8.00" rx="2.20" ry="0.92" fill="#f8ea5e" stroke="#5a4a00" stroke-width=".5"/><path d="M8.50 10.50v2.80a2.50 1.05 0 0 0 5.00 0v-2.80z" fill="#e6c619" stroke="#5a4a00" stroke-width=".5"/><ellipse cx="11.00" cy="10.50" rx="2.50" ry="1.05" fill="#f8ea5e" stroke="#5a4a00" stroke-width=".5"/></svg>
<div class="b" style="left:561px;top:71px;width:1.00px;height:15.00px;background:#d8d8d8;"></div>
<svg class="b" style="left:565px;top:71.5px" width="15" height="13.5" viewBox="0 0 16 16" preserveAspectRatio="none"><path d="M1 7C2.500 3.500 5.500 1.800 9 1.500l6 2.500v7l-6 4.500-8-3z" fill="#2f63ad" stroke="#0f2748" stroke-width=".9" stroke-linejoin="round"/><path d="M1.300 10V7C2.800 3.800 5.500 2.200 9 2l5.500 2.300C11 4.800 9.300 7 9 10.800z" fill="#cc1111" stroke="#5a0808" stroke-width=".4"/><path d="M1.300 10l7.700 .8v4.400" fill="none" stroke="#0f2748" stroke-width=".6"/></svg>
<svg class="b" style="left:585px;top:71.5px" width="13.5" height="13.5" viewBox="0 0 16 16" preserveAspectRatio="none"><path d="M1 11L6.500 2H12l3.500 2.500V11L10 15.500 1 13.500z" fill="#2f63ad" stroke="#0f2748" stroke-width=".9" stroke-linejoin="round"/><path d="M1.500 11L6.800 2.500h5L8 11.500z" fill="#cc1111" stroke="#5a0808" stroke-width=".4"/><path d="M1 11l7 .8v3.300M8 11.800L11.800 2.500" fill="none" stroke="#0f2748" stroke-width=".6"/></svg>
<svg class="b" style="left:603px;top:71.5px" width="13.5" height="13.5" viewBox="0 0 16 16" preserveAspectRatio="none"><path d="M8 .800l7 3.200v8l-7 3.500-7-3.500v-8z" fill="#2f63ad" stroke="#0f2748" stroke-width=".9" stroke-linejoin="round"/><path d="M8 2.200l5.200 2.300L8 7 2.800 4.500z" fill="#ee3a3a"/><path d="M2.200 6l5 2.400v5.600l-5-2.500z" fill="#cc1111"/><path d="M8.800 8.400l5-2.400v5.500l-5 2.500z" fill="#b80f0f"/></svg>
<svg class="b" style="left:621.5px;top:71.5px" width="14.0" height="13.5" viewBox="0 0 16 16" preserveAspectRatio="none"><path d="M2 2.500L12.500 .800 15 2.500V12l-2.500 3.200L1 13.500z" fill="#2f63ad" stroke="#0f2748" stroke-width=".9" stroke-linejoin="round"/><path d="M4.200 4l8-1.200V12.500L3.500 11.500z" fill="#cc1111" stroke="#5a0808" stroke-width=".4"/><path d="M6 4.500v5.500l6.200 .8" fill="none" stroke="#8a0c0c" stroke-width=".7"/><path d="M3.500 11.500L6 10l6.200 .8v1.700z" fill="#a30d0d"/></svg>
<div class="b" style="left:639px;top:71px;width:1.00px;height:15.00px;background:#d8d8d8;"></div>
<svg class="b" style="left:644px;top:72px" width="13.5" height="13" viewBox="0 0 16 16" preserveAspectRatio="none"><defs><radialGradient id="sg" cx=".35" cy=".3" r=".8"><stop offset="0" stop-color="#7fb0e6"/><stop offset="1" stop-color="#2d62a8"/></radialGradient></defs><circle cx="10.800" cy="5.800" r="4.800" fill="url(#sg)" stroke="#28558f" stroke-width=".6"/><circle cx="5.800" cy="9.800" r="5.200" fill="url(#sg)" stroke="#28558f" stroke-width=".6"/></svg>
<div class="b" style="left:660px;top:68px;width:1.00px;height:20.00px;background:#d4d4d4;"></div>
<div class="b" style="left:663px;top:71px;width:1px;height:14px;background:repeating-linear-gradient(#bdbdbd 0 1px,transparent 1px 2px)"></div>
<svg class="b" style="left:669px;top:71.5px" width="14.5" height="14.0" viewBox="0 0 16 16" preserveAspectRatio="none"><path d="M2 3l1.500-2h9l2 2v9l-2 2h-9l-1.500-2z" fill="#d2d2d2" stroke="#4a4a4a" stroke-width=".9"/><circle cx="8.500" cy="7.500" r="4" fill="#e9e9e9" stroke="#777" stroke-width=".7"/><path d="M2 6.500c2-2 5-2 7 0v2.500H2z" fill="#f8ea5e" stroke="#5a4a00" stroke-width=".6"/><path d="M9 11.500l5.500 2v2l-5.500-2z" fill="#e6c619" stroke="#5a4a00" stroke-width=".5"/></svg>
<svg class="b" style="left:688px;top:71.5px" width="14" height="14.0" viewBox="0 0 16 16" preserveAspectRatio="none"><path d="M6 1l8 3v8l-5 3z" fill="#2f63ad" stroke="#0f2748" stroke-width=".7"/><path d="M2 3l1.500-2h9l2 2v9l-2 2h-9l-1.500-2z" fill="#d2d2d2" stroke="#4a4a4a" stroke-width=".9"/><circle cx="8.500" cy="7.500" r="4" fill="#e9e9e9" stroke="#777" stroke-width=".7"/><path d="M2 6.500c2-2 5-2 7 0v2.500H2z" fill="#f8ea5e" stroke="#5a4a00" stroke-width=".6"/><path d="M9 11.500l5.500 2v2l-5.500-2z" fill="#e6c619" stroke="#5a4a00" stroke-width=".5"/><path d="M1 1l5.500 13.500L15 11" fill="none" stroke="#cc1111" stroke-width="1.300"/></svg>
<svg class="b" style="left:705px;top:71px" width="2" height="15"><rect x="0.50" y="0.00" width="1.00" height="15.00" fill="#d8d8d8"/></svg>
<svg class="b" style="left:710px;top:71.5px" width="15" height="14.0" viewBox="0 0 16 16" preserveAspectRatio="none"><path d="M2 3l1.500-2h9l2 2v9l-2 2h-9l-1.500-2z" fill="#d2d2d2" stroke="#4a4a4a" stroke-width=".9"/><circle cx="8.500" cy="7.500" r="4" fill="#e9e9e9" stroke="#777" stroke-width=".7"/><path d="M2 6.500c2-2 5-2 7 0v2.500H2z" fill="#f8ea5e" stroke="#5a4a00" stroke-width=".6"/><path d="M9 11.500l5.500 2v2l-5.500-2z" fill="#e6c619" stroke="#5a4a00" stroke-width=".5"/><path d="M14.500 4a3.500 3.500 0 1 0-1 5.500" fill="none" stroke="#3a78c8" stroke-width="1.700"/><path d="M15.800 2.500v3h-3z" fill="#3a78c8"/></svg>
<svg class="b" style="left:728.5px;top:71.5px" width="14.5" height="14.0" viewBox="0 0 16 16" preserveAspectRatio="none"><path d="M2 3l1.500-2h9l2 2v9l-2 2h-9l-1.500-2z" fill="#d2d2d2" stroke="#4a4a4a" stroke-width=".9"/><circle cx="8.500" cy="7.500" r="4" fill="#e9e9e9" stroke="#777" stroke-width=".7"/><path d="M2 6.500c2-2 5-2 7 0v2.500H2z" fill="#f8ea5e" stroke="#5a4a00" stroke-width=".6"/><path d="M9 11.500l5.500 2v2l-5.500-2z" fill="#e6c619" stroke="#5a4a00" stroke-width=".5"/><path d="M1.500 10.500l5.500 5M7 10.500l-5.500 5" stroke="#cc1111" stroke-width="1.800"/></svg>
<span class="t" style="left:762.80px;top:72.90px;font-size:7.5px;line-height:10px;color:#666;">»</span>
<div class="b" style="left:164px;top:88px;width:604px;height:289px;background:linear-gradient(#343467 0%,#47477a 22%,#6d6d95 50%,#a9a9c0 100%)"></div>
<svg class="b" style="left:163px;top:88px" width="605" height="288" viewBox="163 88 605 288">
<polygon points="305.100,110.200 258,224.700 253.200,233.200 484.500,329 489.700,319.300 536.400,206" fill="#1e1e1e"/>
<polygon points="306.300,111 535.700,206.200 489.200,318.600 259.500,224.500" fill="#dadada" stroke="#3a3a3a" stroke-width=".4"/>
<polygon points="310.300,122.400 524.400,210.900 484.900,307.600 270.400,219.500" fill="none" stroke="#33f24f" stroke-width="0.900"/>
</svg>
<svg class="b" style="left:710px;top:90px" width="58" height="58" viewBox="710 90 58 58">
<g fill="#b4b4cb" fill-opacity=".8">
<path d="M739.500 92l4 5h-8z"/><path d="M739.500 145l4-5h-8z"/><path d="M713.500 118l5-4v8z"/><path d="M767 118l-5-4v8z"/>
<path d="M720.500 104c2-5 6-8 11-9l1 2.500c-4 .8-6.500 2.800-8.500 6l2 1.500-7 1.500z"/>
<path d="M758.500 104c-2-5-6-8-11-9l-1 2.500c4 .8 6.500 2.800 8.500 6l-2 1.500 7 1.500z"/>
</g>
<path d="M732 101l20 7c2 .8 3 2 2.500 4l-5 16c-.8 2-2 3-4.500 2.500l-18-7c-2-.8-3-2.500-2-4.500l4-15c.5-2 1.500-3 3-3z" fill="#d6d6e6" stroke="#9c9cb4" stroke-width=".8"/>
<path d="M733 104l17 6c1 .5 1.500 1.300 1 2.500l-3.500 12c-.5 1.200-1.300 1.600-2.500 1.300l-16-6c-1-.5-1.500-1.200-1.200-2.400l3-11c.4-1.300 1-2 2.200-2.400z" fill="#e6e6f0" stroke="#b5b5c8" stroke-width=".5"/>
<text transform="translate(750.300,122.300) rotate(19) scale(-1,1)" font-family="Liberation Sans, sans-serif" font-size="7" font-weight="bold" fill="#000" textLength="19.500" lengthAdjust="spacingAndGlyphs">BOTTOM</text>
<path d="M732.300 98L751.700 104.800" stroke="#cc1414" stroke-width="1.100"/>
<path d="M732 98L724.300 117" stroke="#19c030" stroke-width="1.100"/>
<path d="M732.500 98.500l1.500 5" stroke="#2244dd" stroke-width="1.100"/>
<path d="M749 137.500l3-1.800 3 1v3.500l-3 1.800-3-1z" fill="#a9a9b9" stroke="#8f8fa3" stroke-width=".4"/>
<path d="M757.500 137l3.500 0-1.700 2z" fill="#8c8ca4"/>
</svg>
<span class="t" style="left:759.50px;top:101.40px;font-size:4.5px;line-height:10px;color:#cc1414;">x</span>
<span class="t" style="left:721.00px;top:117.10px;font-size:4.5px;line-height:10px;color:#19a030;">y</span>
<svg class="b" style="left:748px;top:358px" width="20" height="16" viewBox="748 358 20 16">
<path d="M754.200 363.300l8.300 1.700" stroke="#b01d3a" stroke-width="1.100"/><path d="M754.200 363.300l-2.900 6.800" stroke="#1e9a2c" stroke-width="1.100"/><path d="M754.200 363.300l.6-2" stroke="#2233cc" stroke-width="1"/></svg>
<span class="t" style="left:764.00px;top:360.40px;font-size:4.5px;line-height:10px;color:#8a5a7a;">x</span>
<span class="t" style="left:750.50px;top:365.10px;font-size:4px;line-height:10px;color:#1e7a2c;">y</span>
<span class="t" style="left:755.20px;top:356.10px;font-size:4px;line-height:10px;color:#333388;">z</span>
<div class="b" style="left:340.800px;top:67.200px;width:22.600px;height:23.100px;border:2px solid #f58426;background:#d5e6f6"></div>
<svg class="b" style="left:346px;top:71.8px" width="14.5" height="13.0" viewBox="0 0 16 16" preserveAspectRatio="none"><path d="M.800 7.500L9.500 1.500l6 2.500v4.500L6.500 15.200.800 12z" fill="#2f63ad" stroke="#0f2748" stroke-width=".9" stroke-linejoin="round"/><path d="M.800 7.500L9.500 1.500l6 2.500-9 6.300z" fill="#6fa0dc"/><path d="M.800 7.500l5.700 2.800v4.900M6.500 10.300l9-6.300" fill="none" stroke="#0f2748" stroke-width=".7"/><path d="M5 6.800l4.200-2.900 2.800 1.200-4.200 2.900z" fill="#cc1111" stroke="#5a0808" stroke-width=".6"/><path d="M5 6.800l4.200-2.900v1.300l-3 2.100z" fill="#8a0c0c"/></svg>
<div class="b" style="left:358px;top:90px;width:133px;height:10.500px;background:#fff;box-shadow:.6px .6px 1px rgba(0,0,0,.45)"></div>
<span class="t" style="left:361.30px;top:90.60px;font-size:7.2px;line-height:10px;color:#696969;transform:scaleX(0.9825);">Create a pocket with the selected sketch</span>
<div class="b" style="left:0px;top:88px;width:163.00px;height:320.00px;background:#f0f0f0;"></div>
<div class="b" style="left:0px;top:87px;width:163.00px;height:1.00px;background:#e0e0e0;"></div>
<div class="b" style="left:0;top:88px;width:163px;height:12px;background:linear-gradient(#dadada,#e8e8e8)"></div>
<span class="t" style="left:3.00px;top:90.60px;font-size:7.4px;line-height:10px;color:#222;transform:scaleX(0.9686);">Combo View</span>
<svg class="b" style="left:138.500px;top:91.500px" width="6" height="6" viewBox="0 0 6 6"><path d="M.600 2.200h3.400v3.200H.600z" fill="none" stroke="#2a2a2a" stroke-width=".900"/><path d="M1.800 2.200V.700h3.500v3.200H4" fill="none" stroke="#2a2a2a" stroke-width=".900"/></svg>
<svg class="b" style="left:150px;top:91px" width="8" height="8" viewBox="0 0 8 8"><path d="M1.900 1.800l4.200 4.200M6.100 1.800L1.900 6" stroke="#1a1a1a" stroke-width="1.100"/></svg>
<div class="b" style="left:1px;top:101.5px;width:32.00px;height:13.50px;background:#fff;border:.700px solid #dadada;border-bottom:none"></div>
<div class="b" style="left:33px;top:102.7px;width:28.50px;height:11.60px;background:#f0f0f0;border:.700px solid #dadada;border-bottom:none;border-left:none"></div>
<span class="t" style="left:7.20px;top:103.00px;font-size:7.2px;line-height:10px;color:#1c1c1c;transform:scaleX(0.8568);">Model</span>
<span class="t" style="left:39.40px;top:103.90px;font-size:7.2px;line-height:10px;color:#1c1c1c;transform:scaleX(0.8966);">Tasks</span>
<div class="b" style="left:1px;top:114.3px;width:158.00px;height:126.90px;background:#fff;border:.700px solid #cfcfcf"></div>
<svg class="b" style="left:87px;top:116px" width="1" height="13"><rect x="0.00" y="0.00" width="0.70" height="13.00" fill="#e0e0e0"/></svg>
<svg class="b" style="left:148px;top:116px" width="1" height="13"><rect x="0.00" y="0.00" width="0.70" height="13.00" fill="#e0e0e0"/></svg>
<span class="t" style="left:4.00px;top:118.60px;font-size:7.2px;line-height:10px;color:#1c1c1c;transform:scaleX(1.0244);">Labels &amp; Attributes</span>
<span class="t" style="left:90.00px;top:118.60px;font-size:7.2px;line-height:10px;color:#1c1c1c;transform:scaleX(1.0135);">Description</span>
<span class="t" style="left:4.00px;top:130.80px;font-size:7.2px;line-height:10px;color:#1c1c1c;transform:scaleX(1.0221);">Application</span>
<svg class="b" style="left:4.5px;top:145px" width="6" height="4.500" viewBox="0 0 6 4.500"><path d="M.700 .800l2.300 2.400 2.300-2.400" fill="none" stroke="#222" stroke-width="1.100"/></svg>
<svg class="b" style="left:16.5px;top:142.5px" width="8.5" height="8.5" viewBox="0 0 16 16" preserveAspectRatio="none"><path d="M2 1h9l3 3v11H2z" fill="#f2f2f2" stroke="#8e8e8e" stroke-width=".9"/><path d="M4 8l3-2.500 5 1.500v5l-3 2-5-1.500z" fill="#2f63ad" stroke="#0f2748" stroke-width=".6"/><path d="M4 8l3-2.500 5 1.500-3 2z" fill="#6fa0dc"/><circle cx="10.500" cy="5" r="2.600" fill="#cc1111" stroke="#5a0808" stroke-width=".5"/></svg>
<span class="t" style="left:28.50px;top:142.60px;font-size:7.2px;line-height:10px;color:#1c1c1c;font-weight:bold;transform:scaleX(0.9603);">Unnamed</span>
<svg class="b" style="left:18.0px;top:155.8px" width="4.500" height="6" viewBox="0 0 4.500 6"><path d="M.800 .700l2.400 2.300-2.400 2.300" fill="none" stroke="#8a8a8a" stroke-width=".900"/></svg>
<svg class="b" style="left:29px;top:155px" width="7.5" height="7.5" viewBox="0 0 16 16" preserveAspectRatio="none"><path d="M1 5.500L5.500 2 9.500 3.800v3.400l2-1.400 3.500 1.700v4L8 15.500 1 12z" fill="#2f63ad" stroke="#0f2748" stroke-width=".9" stroke-linejoin="round"/><path d="M1 5.500L5.500 2 9.500 3.800 5 7.300z" fill="#6fa0dc"/><path d="M5 10.800l6.500-5 3.500 1.700L8 12.200z" fill="#6fa0dc"/><path d="M1 5.500l4 1.800v3.500l3 1.400v3.300M5 7.300l4.500-3.500M8 12.200l7-4.700" fill="none" stroke="#0f2748" stroke-width=".6"/></svg>
<span class="t" style="left:40.00px;top:154.40px;font-size:7.2px;line-height:10px;color:#1c1c1c;transform:scaleX(1.0664);">Body</span>
<svg class="b" style="left:26px;top:164px" width="61" height="13"><rect x="0.50" y="0.50" width="60.50" height="12.00" fill="#e4e4f7"/></svg>
<svg class="b" style="left:16.5px;top:168.5px" width="6" height="4.500" viewBox="0 0 6 4.500"><path d="M.700 .800l2.300 2.400 2.300-2.400" fill="none" stroke="#222" stroke-width="1.100"/></svg>
<svg class="b" style="left:29px;top:166.8px" width="7.5" height="7.5" viewBox="0 0 16 16" preserveAspectRatio="none"><path d="M1 5.500L5.500 2 9.500 3.800v3.400l2-1.400 3.500 1.700v4L8 15.500 1 12z" fill="#2f63ad" stroke="#0f2748" stroke-width=".9" stroke-linejoin="round"/><path d="M1 5.500L5.500 2 9.500 3.800 5 7.300z" fill="#6fa0dc"/><path d="M5 10.800l6.500-5 3.500 1.700L8 12.200z" fill="#6fa0dc"/><path d="M1 5.500l4 1.800v3.500l3 1.400v3.300M5 7.300l4.500-3.500M8 12.200l7-4.700" fill="none" stroke="#0f2748" stroke-width=".6"/></svg>
<span class="t" style="left:40.00px;top:166.10px;font-size:7.2px;line-height:10px;color:#1c1c1c;font-weight:bold;transform:scaleX(1.0163);">Body001</span>
<svg class="b" style="left:31.0px;top:179.7px" width="4.500" height="6" viewBox="0 0 4.500 6"><path d="M.800 .700l2.400 2.300-2.400 2.300" fill="none" stroke="#8a8a8a" stroke-width=".900"/></svg>
<div class="b" style="left:39px;top:177px;width:47.50px;height:11.50px;background:#fff;border:.700px solid #c9c9c9"></div>
<svg class="b" style="left:42px;top:178.500px" width="8" height="8" viewBox="0 0 8 8"><path d="M2.500 .500V5L.500 7.500M2.500 5l5 .800" fill="none" stroke="#555" stroke-width=".900"/></svg>
<span class="t" style="left:53.00px;top:178.30px;font-size:7.2px;line-height:10px;color:#9a9a9a;transform:scaleX(0.9931);">Origin001</span>
<svg class="b" style="left:31.0px;top:191.8px" width="4.500" height="6" viewBox="0 0 4.500 6"><path d="M.800 .700l2.400 2.300-2.400 2.300" fill="none" stroke="#8a8a8a" stroke-width=".900"/></svg>
<svg class="b" style="left:40.500px;top:190.500px" width="8.500" height="8.500" viewBox="0 0 16 16"><path d="M1 5l4-3.500h9.500v8L11 13H1z" fill="#2f63ad" stroke="#0f2748" stroke-width="1"/><path d="M5 1.500h9.500L11 5H1z" fill="#6fa0dc"/><circle cx="10.500" cy="11.500" r="4" fill="#2fc23a" stroke="#0d5a14" stroke-width=".8"/></svg>
<span class="t" style="left:53.00px;top:190.40px;font-size:7.2px;line-height:10px;color:#1c1c1c;transform:scaleX(0.8587);">Pad</span>
<svg class="b" style="left:38px;top:201px" width="110" height="12"><rect x="0.00" y="0.50" width="110.00" height="11.30" fill="#cce8ff"/></svg>
<svg class="b" style="left:40.500px;top:203px" width="8.500" height="8.500" viewBox="0 0 16 16"><path d="M2 7h8v7H2z" fill="#f3dede" stroke="#8a1538" stroke-width="1.600"/><circle cx="10" cy="6" r="4" fill="#f7e6ea" stroke="#8a1538" stroke-width="1.600"/></svg>
<span class="t" style="left:53.00px;top:202.60px;font-size:7.2px;line-height:10px;color:#1c1c1c;transform:scaleX(0.9700);">Sketch001</span>
<div class="b" style="left:2.3px;top:245.2px;width:153.70px;height:129.80px;background:#fff;border:.700px solid #cfcfcf"></div>
<svg class="b" style="left:62px;top:246px" width="2" height="15"><rect x="0.50" y="0.00" width="0.70" height="14.50" fill="#e0e0e0"/></svg>
<span class="t" style="left:5.60px;top:249.80px;font-size:7.2px;line-height:10px;color:#1c1c1c;transform:scaleX(0.9923);">Property</span>
<span class="t" style="left:65.20px;top:249.80px;font-size:7.2px;line-height:10px;color:#1c1c1c;transform:scaleX(0.9508);">Value</span>
<svg class="b" style="left:3px;top:261px" width="143" height="12"><rect x="0.00" y="0.60" width="142.50" height="10.80" fill="#a2a2a2"/></svg>
<span class="t" style="left:17.00px;top:262.60px;font-size:7.2px;line-height:10px;color:#fff;font-weight:bold;">Attachment</span>
<svg class="b" style="left:15px;top:273px" width="131" height="12"><rect x="0.50" y="0.20" width="130.00" height="11.70" fill="#f4f4f4"/></svg>
<svg class="b" style="left:15px;top:284px" width="131" height="2"><rect x="0.50" y="0.70" width="130.00" height="0.70" fill="#e4e4e4"/></svg>
<svg class="b" style="left:62px;top:273px" width="2" height="13"><rect x="0.80" y="0.20" width="0.70" height="12.20" fill="#e0e0e0"/></svg>
<span class="t" style="left:17.00px;top:275.40px;font-size:7.2px;line-height:10px;color:#1a1a1a;transform:scaleX(0.9914);">Support</span>
<span class="t" style="left:65.00px;top:275.40px;font-size:7.2px;line-height:10px;color:#1a1a1a;transform:scaleX(0.9119);">Pad [Face5]</span>
<svg class="b" style="left:15px;top:285px" width="131" height="13"><rect x="0.50" y="0.40" width="130.00" height="12.00" fill="#fff"/></svg>
<svg class="b" style="left:15px;top:297px" width="131" height="1"><rect x="0.50" y="0.20" width="130.00" height="0.70" fill="#e4e4e4"/></svg>
<svg class="b" style="left:62px;top:285px" width="2" height="13"><rect x="0.80" y="0.40" width="0.70" height="12.50" fill="#e0e0e0"/></svg>
<span class="t" style="left:17.00px;top:287.75px;font-size:7.2px;line-height:10px;color:#1a1a1a;transform:scaleX(1.0172);">Map Mode</span>
<span class="t" style="left:65.00px;top:287.75px;font-size:7.2px;line-height:10px;color:#1a1a1a;transform:scaleX(0.8926);">FlatFace</span>
<svg class="b" style="left:15px;top:297px" width="131" height="13"><rect x="0.50" y="0.90" width="130.00" height="11.90" fill="#f4f4f4"/></svg>
<svg class="b" style="left:15px;top:309px" width="131" height="2"><rect x="0.50" y="0.60" width="130.00" height="0.70" fill="#e4e4e4"/></svg>
<svg class="b" style="left:62px;top:297px" width="2" height="14"><rect x="0.80" y="0.90" width="0.70" height="12.40" fill="#e0e0e0"/></svg>
<span class="t" style="left:17.00px;top:300.20px;font-size:7.2px;line-height:10px;color:#1a1a1a;transform:scaleX(0.9373);">Map Revers...</span>
<span class="t" style="left:65.00px;top:300.20px;font-size:7.2px;line-height:10px;color:#1a1a1a;transform:scaleX(0.9337);">false</span>
<svg class="b" style="left:15px;top:310px" width="131" height="13"><rect x="0.50" y="0.30" width="130.00" height="11.90" fill="#fff"/></svg>
<svg class="b" style="left:15px;top:322px" width="131" height="1"><rect x="0.50" y="0.00" width="130.00" height="0.70" fill="#e4e4e4"/></svg>
<svg class="b" style="left:62px;top:310px" width="2" height="13"><rect x="0.80" y="0.30" width="0.70" height="12.40" fill="#e0e0e0"/></svg>
<svg class="b" style="left:7.800000000000001px;top:314.2px" width="4.500" height="6" viewBox="0 0 4.500 6"><path d="M.800 .700l2.400 2.300-2.400 2.300" fill="none" stroke="#777" stroke-width=".900"/></svg>
<span class="t" style="left:17.00px;top:312.60px;font-size:7.2px;line-height:10px;color:#1a1a1a;transform:scaleX(0.9906);">Attachment ...</span>
<span class="t" style="left:65.00px;top:312.60px;font-size:7.2px;line-height:10px;color:#1a1a1a;transform:scaleX(0.9361);">[(0.00 0.00 1.00); 0.00 *;...</span>
<svg class="b" style="left:3px;top:322px" width="143" height="13"><rect x="0.00" y="0.70" width="142.50" height="11.90" fill="#a2a2a2"/></svg>
<span class="t" style="left:17.00px;top:325.85px;font-size:7.2px;line-height:10px;color:#fff;font-weight:bold;transform:scaleX(0.8889);">Base</span>
<svg class="b" style="left:15px;top:335px" width="131" height="13"><rect x="0.50" y="0.40" width="130.00" height="12.50" fill="#fff"/></svg>
<svg class="b" style="left:15px;top:347px" width="131" height="2"><rect x="0.50" y="0.70" width="130.00" height="0.70" fill="#e4e4e4"/></svg>
<svg class="b" style="left:62px;top:335px" width="2" height="14"><rect x="0.80" y="0.40" width="0.70" height="13.00" fill="#e0e0e0"/></svg>
<svg class="b" style="left:7.800000000000001px;top:339.59999999999997px" width="4.500" height="6" viewBox="0 0 4.500 6"><path d="M.800 .700l2.400 2.300-2.400 2.300" fill="none" stroke="#777" stroke-width=".900"/></svg>
<span class="t" style="left:17.00px;top:338.60px;font-size:7.2px;line-height:10px;color:#1a1a1a;transform:scaleX(0.9584);">Placement</span>
<span class="t" style="left:65.00px;top:338.60px;font-size:7.2px;line-height:10px;color:#1a1a1a;transform:scaleX(0.9351);">[(1.00 0.00 0.00); 180.0...</span>
<svg class="b" style="left:15px;top:348px" width="131" height="13"><rect x="0.50" y="0.40" width="130.00" height="12.50" fill="#f4f4f4"/></svg>
<svg class="b" style="left:15px;top:360px" width="131" height="2"><rect x="0.50" y="0.70" width="130.00" height="0.70" fill="#e4e4e4"/></svg>
<svg class="b" style="left:62px;top:348px" width="2" height="14"><rect x="0.80" y="0.40" width="0.70" height="13.00" fill="#e0e0e0"/></svg>
<span class="t" style="left:17.00px;top:351.00px;font-size:7.2px;line-height:10px;color:#1a1a1a;transform:scaleX(0.9083);">Label</span>
<span class="t" style="left:65.00px;top:351.00px;font-size:7.2px;line-height:10px;color:#1a1a1a;transform:scaleX(0.9406);">Sketch001</span>
<svg class="b" style="left:3px;top:361px" width="143" height="13"><rect x="0.00" y="0.40" width="142.50" height="12.20" fill="#a2a2a2"/></svg>
<span class="t" style="left:17.00px;top:363.70px;font-size:7.2px;line-height:10px;color:#fff;font-weight:bold;transform:scaleX(0.9318);">Sketch</span>
<svg class="b" style="left:146px;top:246px" width="10" height="129"><rect x="0.00" y="0.00" width="9.30" height="128.30" fill="#f0f0f0"/></svg>
<svg class="b" style="left:146px;top:256px" width="10" height="88"><rect x="0.00" y="0.50" width="9.30" height="86.90" fill="#cdcdcd"/></svg>
<svg class="b" style="left:147.800px;top:249.500px" width="6" height="4" viewBox="0 0 6 4"><path d="M.800 3.200L3 1l2.200 2.200" fill="none" stroke="#555" stroke-width=".900"/></svg>
<svg class="b" style="left:147.800px;top:367px" width="6" height="4" viewBox="0 0 6 4"><path d="M.800 .800L3 3l2.200-2.200" fill="none" stroke="#555" stroke-width=".900"/></svg>
<div class="b" style="left:2.5px;top:376px;width:25.50px;height:10.80px;background:#f3f3f3;border:.600px solid #dedede;border-top:none"></div>
<div class="b" style="left:28px;top:375px;width:29.50px;height:13.80px;background:#fff;border:.600px solid #dedede;border-top:none"></div>
<span class="t" style="left:8.30px;top:377.20px;font-size:7.2px;line-height:10px;color:#1c1c1c;transform:scaleX(0.8788);">View</span>
<span class="t" style="left:36.90px;top:377.90px;font-size:7.2px;line-height:10px;color:#1c1c1c;transform:scaleX(0.8614);">Data</span>
<div class="b" style="left:163px;top:377px;width:605.00px;height:15.00px;background:#f0f0f0;"></div>
<div class="b" style="left:165px;top:377px;width:66.50px;height:12.50px;background:#f0f0f0;border:.600px solid #e0e0e0;border-top:none"></div>
<svg class="b" style="left:171px;top:379px" width="8.5" height="9.5" viewBox="0 0 16 16" preserveAspectRatio="none"><path d="M1 1h9v3H4.800v2.500H9v3H4.800V15H1z" fill="#d01f1f" stroke="#8a0e0e" stroke-width=".5"/><circle cx="11" cy="10.500" r="4" fill="#3465a4" stroke="#1b3a6b" stroke-width="1.600" stroke-dasharray="1.500 1.100"/><circle cx="11" cy="10.500" r="1.500" fill="#fff"/></svg>
<span class="t" style="left:183.00px;top:379.60px;font-size:7.2px;line-height:10px;color:#1c1c1c;transform:scaleX(0.9181);">Start page</span>
<div class="b" style="left:216px;top:380px;width:8.00px;height:8.00px;background:#c9c9c9;border-radius:1px"></div>
<svg class="b" style="left:216px;top:380px" width="8" height="8" viewBox="0 0 8 8"><path d="M2.300 2.300l3.400 3.400M5.700 2.300L2.300 5.700" stroke="#fff" stroke-width="1.100"/></svg>
<div class="b" style="left:231.5px;top:377px;width:81.50px;height:14.00px;background:#fff;border:.600px solid #e4e4e4;border-top:none"></div>
<svg class="b" style="left:240px;top:379.5px" width="8.5" height="9.5" viewBox="0 0 16 16" preserveAspectRatio="none"><path d="M1 1h9v3H4.800v2.500H9v3H4.800V15H1z" fill="#d01f1f" stroke="#8a0e0e" stroke-width=".5"/><circle cx="11" cy="10.500" r="4" fill="#3465a4" stroke="#1b3a6b" stroke-width="1.600" stroke-dasharray="1.500 1.100"/><circle cx="11" cy="10.500" r="1.500" fill="#fff"/></svg>
<span class="t" style="left:252.00px;top:380.10px;font-size:7.2px;line-height:10px;color:#1c1c1c;transform:scaleX(0.9313);">Unnamed : 1*</span>
<div class="b" style="left:296.3px;top:380px;width:8.50px;height:8.50px;background:#e55f3b;border-radius:1px"></div>
<svg class="b" style="left:296.300px;top:380px" width="8.500" height="8.500" viewBox="0 0 8 8"><path d="M2.300 2.300l3.400 3.400M5.700 2.300L2.300 5.700" stroke="#fff" stroke-width="1.200"/></svg>
<div class="b" style="left:0px;top:392px;width:768.00px;height:16.00px;background:#f0f0f0;"></div>
<span class="t" style="left:4.20px;top:395.60px;font-size:7.2px;line-height:10px;color:#1c1c1c;transform:scaleX(0.9794);">Create a pocket with the selected sketch</span>
<svg class="b" style="left:651.500px;top:395.500px" width="9.500" height="9.500" viewBox="0 0 10 10"><path d="M2 4.500A3.200 3.200 0 0 1 8.200 3.500" fill="none" stroke="#222" stroke-width="1.500"/><path d="M8 5.500A3.200 3.200 0 0 1 1.800 6.500" fill="none" stroke="#222" stroke-width="1.500"/><circle cx="8.300" cy="4" r="1.300" fill="#222"/><circle cx="1.800" cy="6.200" r="1.300" fill="#222"/></svg>
<span class="t" style="left:662.50px;top:395.90px;font-size:7.2px;line-height:10px;color:#1c1c1c;transform:scaleX(0.9257);">Gestur</span>
<svg class="b" style="left:685.5px;top:399.5px" width="4.0" height="2.5" viewBox="0 0 8 5" preserveAspectRatio="none"><path d="M0 0h8L4 5z" fill="#111"/></svg>
<svg class="b" style="left:693px;top:394px" width="1" height="13"><rect x="0.00" y="0.00" width="0.80" height="13.00" fill="#d0d0d0"/></svg>
<span class="t" style="left:696.50px;top:395.90px;font-size:7.2px;line-height:10px;color:#1c1c1c;transform:scaleX(0.9189);">115.25 mm x 54.88 mm</span>
</body></html>
